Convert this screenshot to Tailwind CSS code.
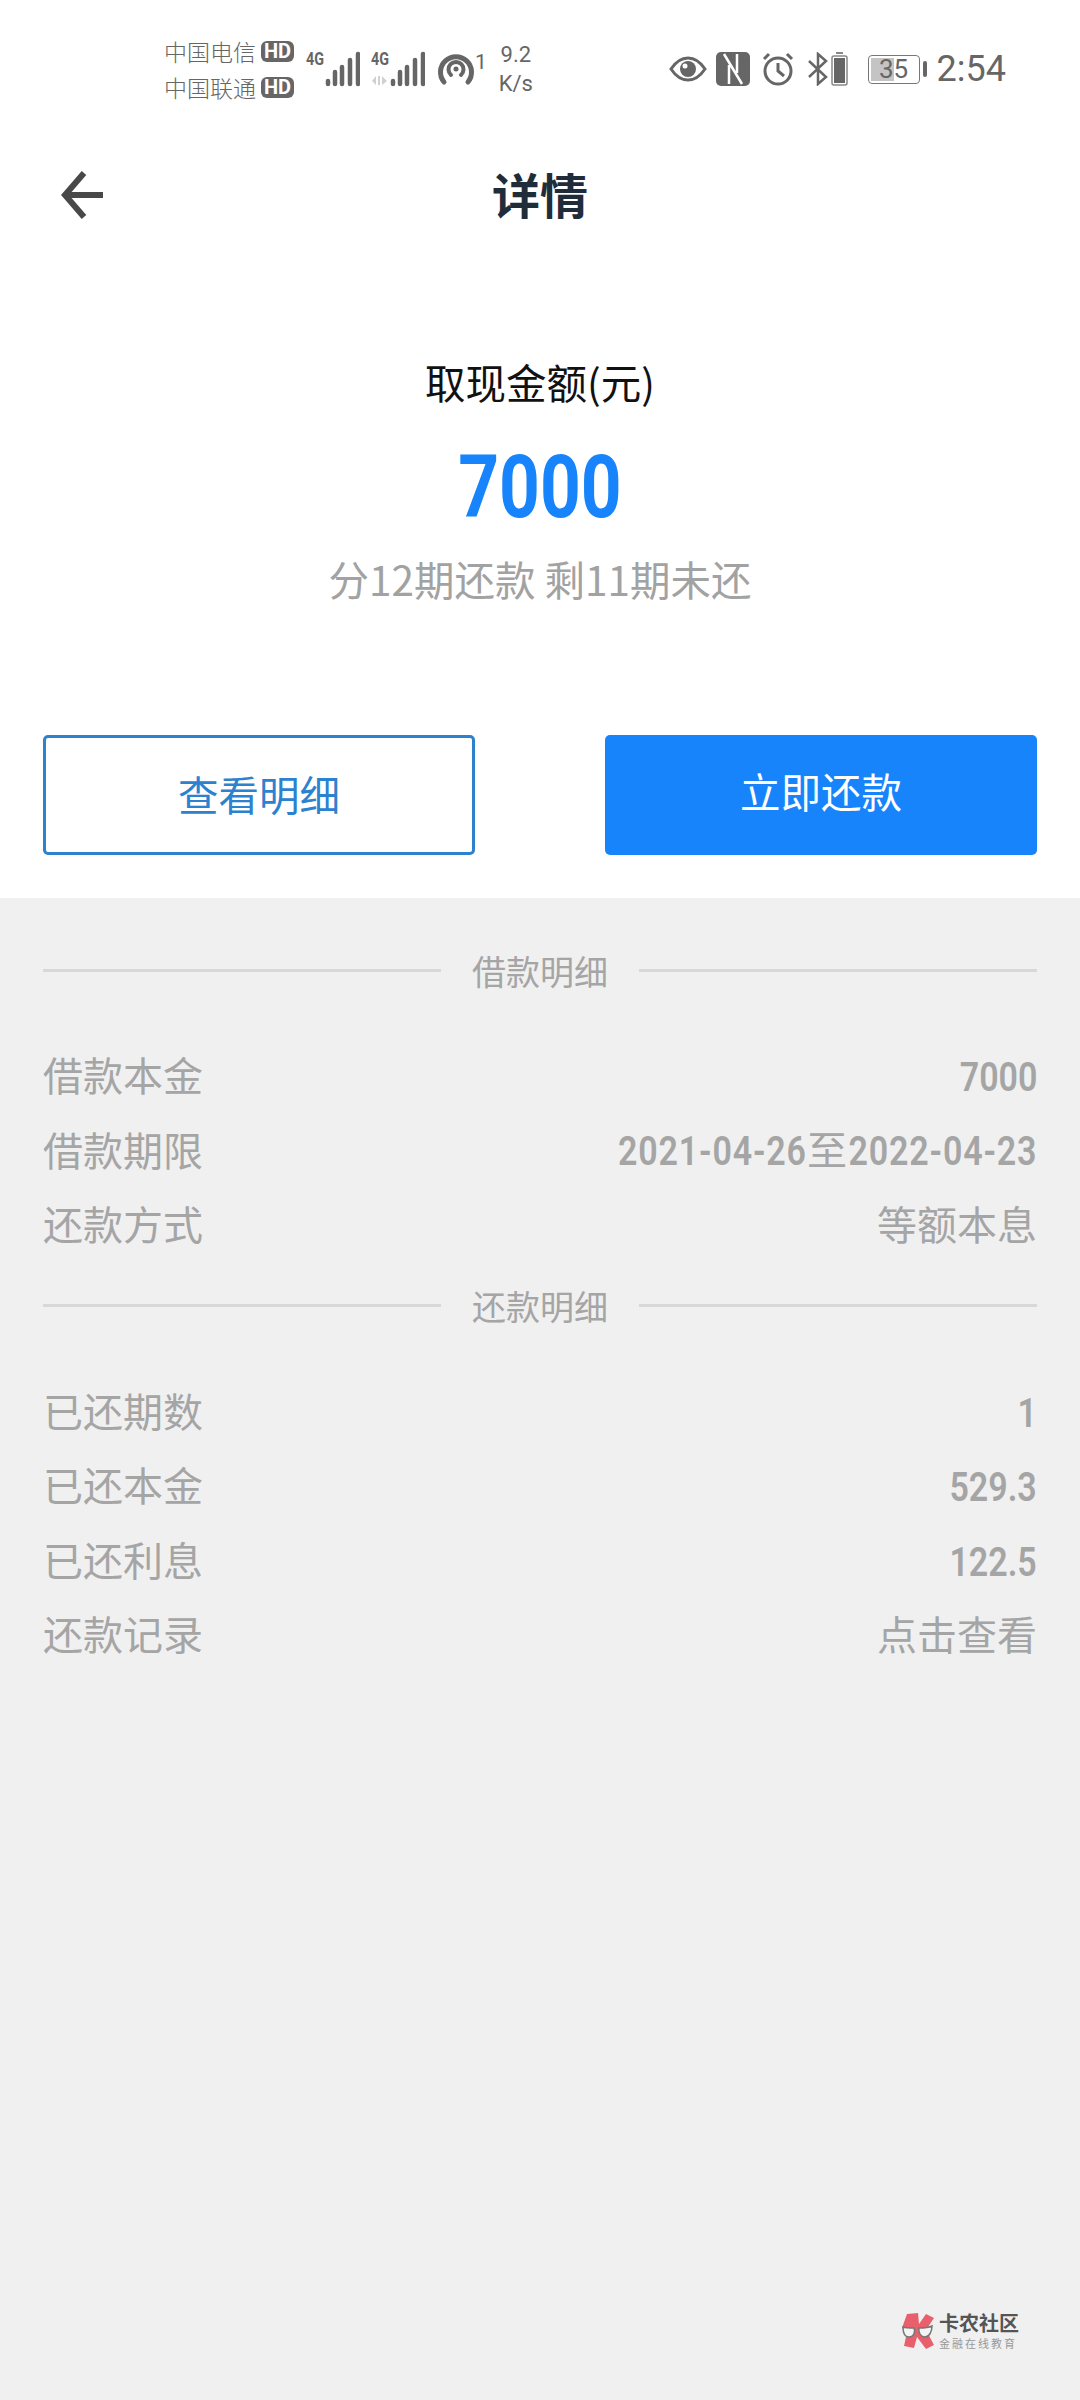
<!DOCTYPE html>
<html lang="zh-CN">
<head>
  <meta charset="UTF-8">
  <title>详情</title>
  <script src="https://cdn.jsdelivr.net/npm/@tailwindcss/browser@4"></script>
</head>
<body class="w-[1080px] h-[2400px] bg-[#f0f0f0] overflow-hidden font-['Noto_Sans_CJK_SC','Noto_Sans',sans-serif]">
  <div class="bg-white h-[898px]">
    <!-- Status bar -->
    <div class="h-[138px] pl-[164px] pr-[74px] flex items-center text-[#666666] font-['Roboto','Noto_Sans_CJK_SC',sans-serif]">
      <div class="flex flex-col gap-[8px] text-[23px] leading-[28px] w-[142px] shrink-0">
        <div class="flex items-center gap-[5px]">
          <span class="font-['Noto_Sans_CJK_SC'] font-light whitespace-nowrap">中国电信</span>
          <span class="bg-[#666666] text-white rounded-[6px] text-[20px] leading-[21px] font-bold px-[3px]">HD</span>
        </div>
        <div class="flex items-center gap-[5px]">
          <span class="font-['Noto_Sans_CJK_SC'] font-light whitespace-nowrap">中国联通</span>
          <span class="bg-[#666666] text-white rounded-[6px] text-[20px] leading-[21px] font-bold px-[3px]">HD</span>
        </div>
      </div>
      <div class="flex items-center gap-[11px]">
        <svg width="54" height="40" viewBox="0 -4 54 40" class="text-[#666666] mb-[4px]">
          <text x="0" y="14" font-size="18" font-weight="700" font-family="Roboto" fill="currentColor" textLength="18" lengthAdjust="spacingAndGlyphs">4G</text>
          <g fill="none" stroke="currentColor" stroke-width="4.5" stroke-linecap="round">
            <path d="M22 30v3M29 21v12M36 16v17M44 9v24M52 3v30"/>
          </g>
        </svg>
        <svg width="54" height="40" viewBox="0 -4 54 40" class="text-[#666666] mb-[4px]">
          <text x="0" y="14" font-size="18" font-weight="700" font-family="Roboto" fill="currentColor" textLength="18" lengthAdjust="spacingAndGlyphs">4G</text>
          <g fill="#d0d0d0"><path d="M5 34v-9l-4 5zM7 25h2v9H7zM11 25v9l5-4z"/></g>
          <g fill="none" stroke="currentColor" stroke-width="4.5" stroke-linecap="round">
            <path d="M22 30v3M29 21v12M36 16v17M44 9v24M52 3v30"/>
          </g>
        </svg>
        <div class="flex items-start ml-[1px]">
          <svg width="38" height="34" viewBox="0 0 38 34" fill="none" stroke="#666666">
            <path d="M7 30A15.5 15.5 0 1 1 31 30" stroke-width="5" stroke-linecap="round"/>
            <path d="M14 23A7.5 7.5 0 1 1 24 23" stroke-width="4" stroke-linecap="round"/>
            <circle cx="19" cy="17" r="2.5" fill="#666666" stroke="none"/>
          </svg>
          <span class="text-[21px] leading-[20px]">1</span>
        </div>
      </div>
      <div class="ml-[10px] text-[22px] leading-[29px] text-center w-[38px] shrink-0">
        <div>9.2</div>
        <div>K/s</div>
      </div>
      <div class="ml-auto flex items-center">
        <svg width="38" height="26" viewBox="0 0 38 26" fill="none">
          <path d="M2 13C8 4 14 2 19 2s11 2 17 11c-6 9-12 11-17 11S8 22 2 13z" stroke="#666666" stroke-width="3"/>
          <circle cx="19" cy="13" r="8" fill="#666666"/>
          <circle cx="16" cy="10" r="2.5" fill="#ffffff"/>
        </svg>
        <svg width="34" height="34" viewBox="0 0 34 34" class="ml-[9px]">
          <rect width="34" height="34" rx="5" fill="#666666"/>
          <path d="M8 2l18 30M13 13v19M21 2v19" fill="none" stroke="#ffffff" stroke-width="2.5"/>
        </svg>
        <svg width="34" height="34" viewBox="0 0 34 34" fill="none" stroke="#666666" class="ml-[11px]">
          <circle cx="17" cy="19" r="13" stroke-width="3"/>
          <path d="M17 11v8l6 5" stroke-width="3"/>
          <path d="M3 7l5-5M31 7l-5-5" stroke-width="3"/>
        </svg>
        <svg width="22" height="34" viewBox="0 0 22 34" fill="none" stroke="#666666" class="ml-[12px]">
          <path d="M2 9l17 16-8 7V2l8 7L2 25" stroke-width="2.5"/>
        </svg>
        <svg width="17" height="34" viewBox="0 0 17 34" class="ml-[2px]">
          <rect x="5" y="0" width="7" height="2" fill="#888888"/>
          <rect x="1" y="4" width="15" height="29" rx="2" fill="none" stroke="#888888" stroke-width="1.5"/>
          <rect x="3" y="6" width="11" height="25" fill="#666666"/>
        </svg>
        <div class="ml-[20px] relative w-[52px] h-[29px] rounded-[4px] border-[1.5px] border-[#777777] text-[26px] leading-[26px] text-center">
          <div class="absolute left-[2px] top-[2px] bottom-[2px] w-[23px] bg-[#c4c4c4]"></div>
          <span class="relative">35</span>
        </div>
        <div class="ml-[3px] w-[4px] h-[16px] rounded-[2px] bg-[#666666]"></div>
        <span class="ml-[10px] text-[36px] leading-[40px]">2:54</span>
      </div>
    </div>
    <!-- Header -->
    <div class="relative h-[110px] flex items-center justify-center">
      <svg width="44" height="50" viewBox="0 0 44 50" fill="none" stroke="#484848" stroke-width="6" class="absolute left-[60px] top-[32px]">
        <path d="M24 3L5 25l19 22M5 25h38"/>
      </svg>
      <h1 class="text-[48px] font-bold text-[#1f2d3a] leading-[60px]">详情</h1>
    </div>
    <!-- Amount -->
    <div class="mt-[104px] flex flex-col items-center">
      <div class="text-[40.5px] leading-[60px] text-[#111111]">取现金额(元)</div>
      <div class="mt-[30px] text-[88px] leading-[90px] font-bold text-[#1784fb] font-['Roboto',sans-serif] scale-x-[.81]">7000</div>
      <div class="mt-[17px] text-[40.5px] leading-[60px] text-[#a2a2a2]">分12期还款 剩11期未还</div>
    </div>
    <!-- Buttons -->
    <div class="mt-[126px] px-[43px] flex justify-between">
      <button class="w-[432px] h-[120px] rounded-[5px] border-[3px] border-[#2d82cf] text-[#2d82cf] text-[40.5px] pb-[2px]">查看明细</button>
      <button class="w-[432px] h-[120px] rounded-[5px] bg-[#1784fb] text-white text-[40.5px] pb-[8px]">立即还款</button>
    </div>
  </div>

  <!-- Loan detail -->
  <div class="px-[43px] pt-[44px] text-[#a5a5a5]">
    <div class="flex items-center h-[56px]">
      <div class="flex-1 h-[3px] bg-[#d8d8d8]"></div>
      <span class="w-[198px] text-center text-[34px]">借款明细</span>
      <div class="flex-1 h-[3px] bg-[#d8d8d8]"></div>
    </div>
    <div class="mt-[39px] flex flex-col">
      <div class="h-[74.5px] flex items-center justify-between text-[40px]"><span>借款本金</span><span class="font-['Roboto',sans-serif] font-semibold origin-right scale-x-[.85] translate-y-[4px]">7000</span></div>
      <div class="h-[74.5px] flex items-center justify-between text-[40px]"><span>借款期限</span><span class="font-['Roboto',sans-serif] font-semibold origin-right scale-x-[.85] tracking-[1px] translate-y-[1px]">2021-04-26<span class="inline-block mx-[4px] font-['Noto_Sans_CJK_SC'] font-normal scale-x-[1.18]">至</span>2022-04-23</span></div>
      <div class="h-[74.5px] flex items-center justify-between text-[40px]"><span>还款方式</span><span>等额本息</span></div>
    </div>
    <div class="mt-[17px] flex items-center h-[56px]">
      <div class="flex-1 h-[3px] bg-[#d8d8d8]"></div>
      <span class="w-[198px] text-center text-[34px]">还款明细</span>
      <div class="flex-1 h-[3px] bg-[#d8d8d8]"></div>
    </div>
    <div class="mt-[39px] flex flex-col">
      <div class="h-[74.5px] flex items-center justify-between text-[40px]"><span>已还期数</span><span class="font-['Roboto',sans-serif] font-semibold origin-right scale-x-[.85] translate-y-[4px]">1</span></div>
      <div class="h-[74.5px] flex items-center justify-between text-[40px]"><span>已还本金</span><span class="font-['Roboto',sans-serif] font-semibold origin-right scale-x-[.85] translate-y-[4px]">529.3</span></div>
      <div class="h-[74.5px] flex items-center justify-between text-[40px]"><span>已还利息</span><span class="font-['Roboto',sans-serif] font-semibold origin-right scale-x-[.85] translate-y-[4px]">122.5</span></div>
      <div class="h-[74.5px] flex items-center justify-between text-[40px]"><span>还款记录</span><span>点击查看</span></div>
    </div>
  </div>

  <!-- Watermark -->
  <div class="absolute left-[901px] top-[2311px] flex items-center gap-[4px]">
    <svg width="34" height="38" viewBox="0 0 34 38">
      <path d="M6 2l11-1 1 11 7-10 8 4-8 12 8 15-8 4-9-12-3 11-10-2 3-14-5-4z" fill="#e8606c"/>
      <path d="M2 15c3 1 6 1 11 1 2 5-1 9-5 9s-6-4-6-10zM31 14c-4 2-8 2-13 2-1 5 2 9 6 9s7-5 7-11z" fill="#f4f4f4" stroke="#777777" stroke-width="1.5"/>
    </svg>
    <div class="flex flex-col">
      <span class="text-[20px] leading-[24px] font-bold text-[#555555] whitespace-nowrap">卡农社区</span>
      <span class="text-[11px] leading-[16px] tracking-[2px] text-[#999999] whitespace-nowrap">金融在线教育</span>
    </div>
  </div>
</body>
</html>
